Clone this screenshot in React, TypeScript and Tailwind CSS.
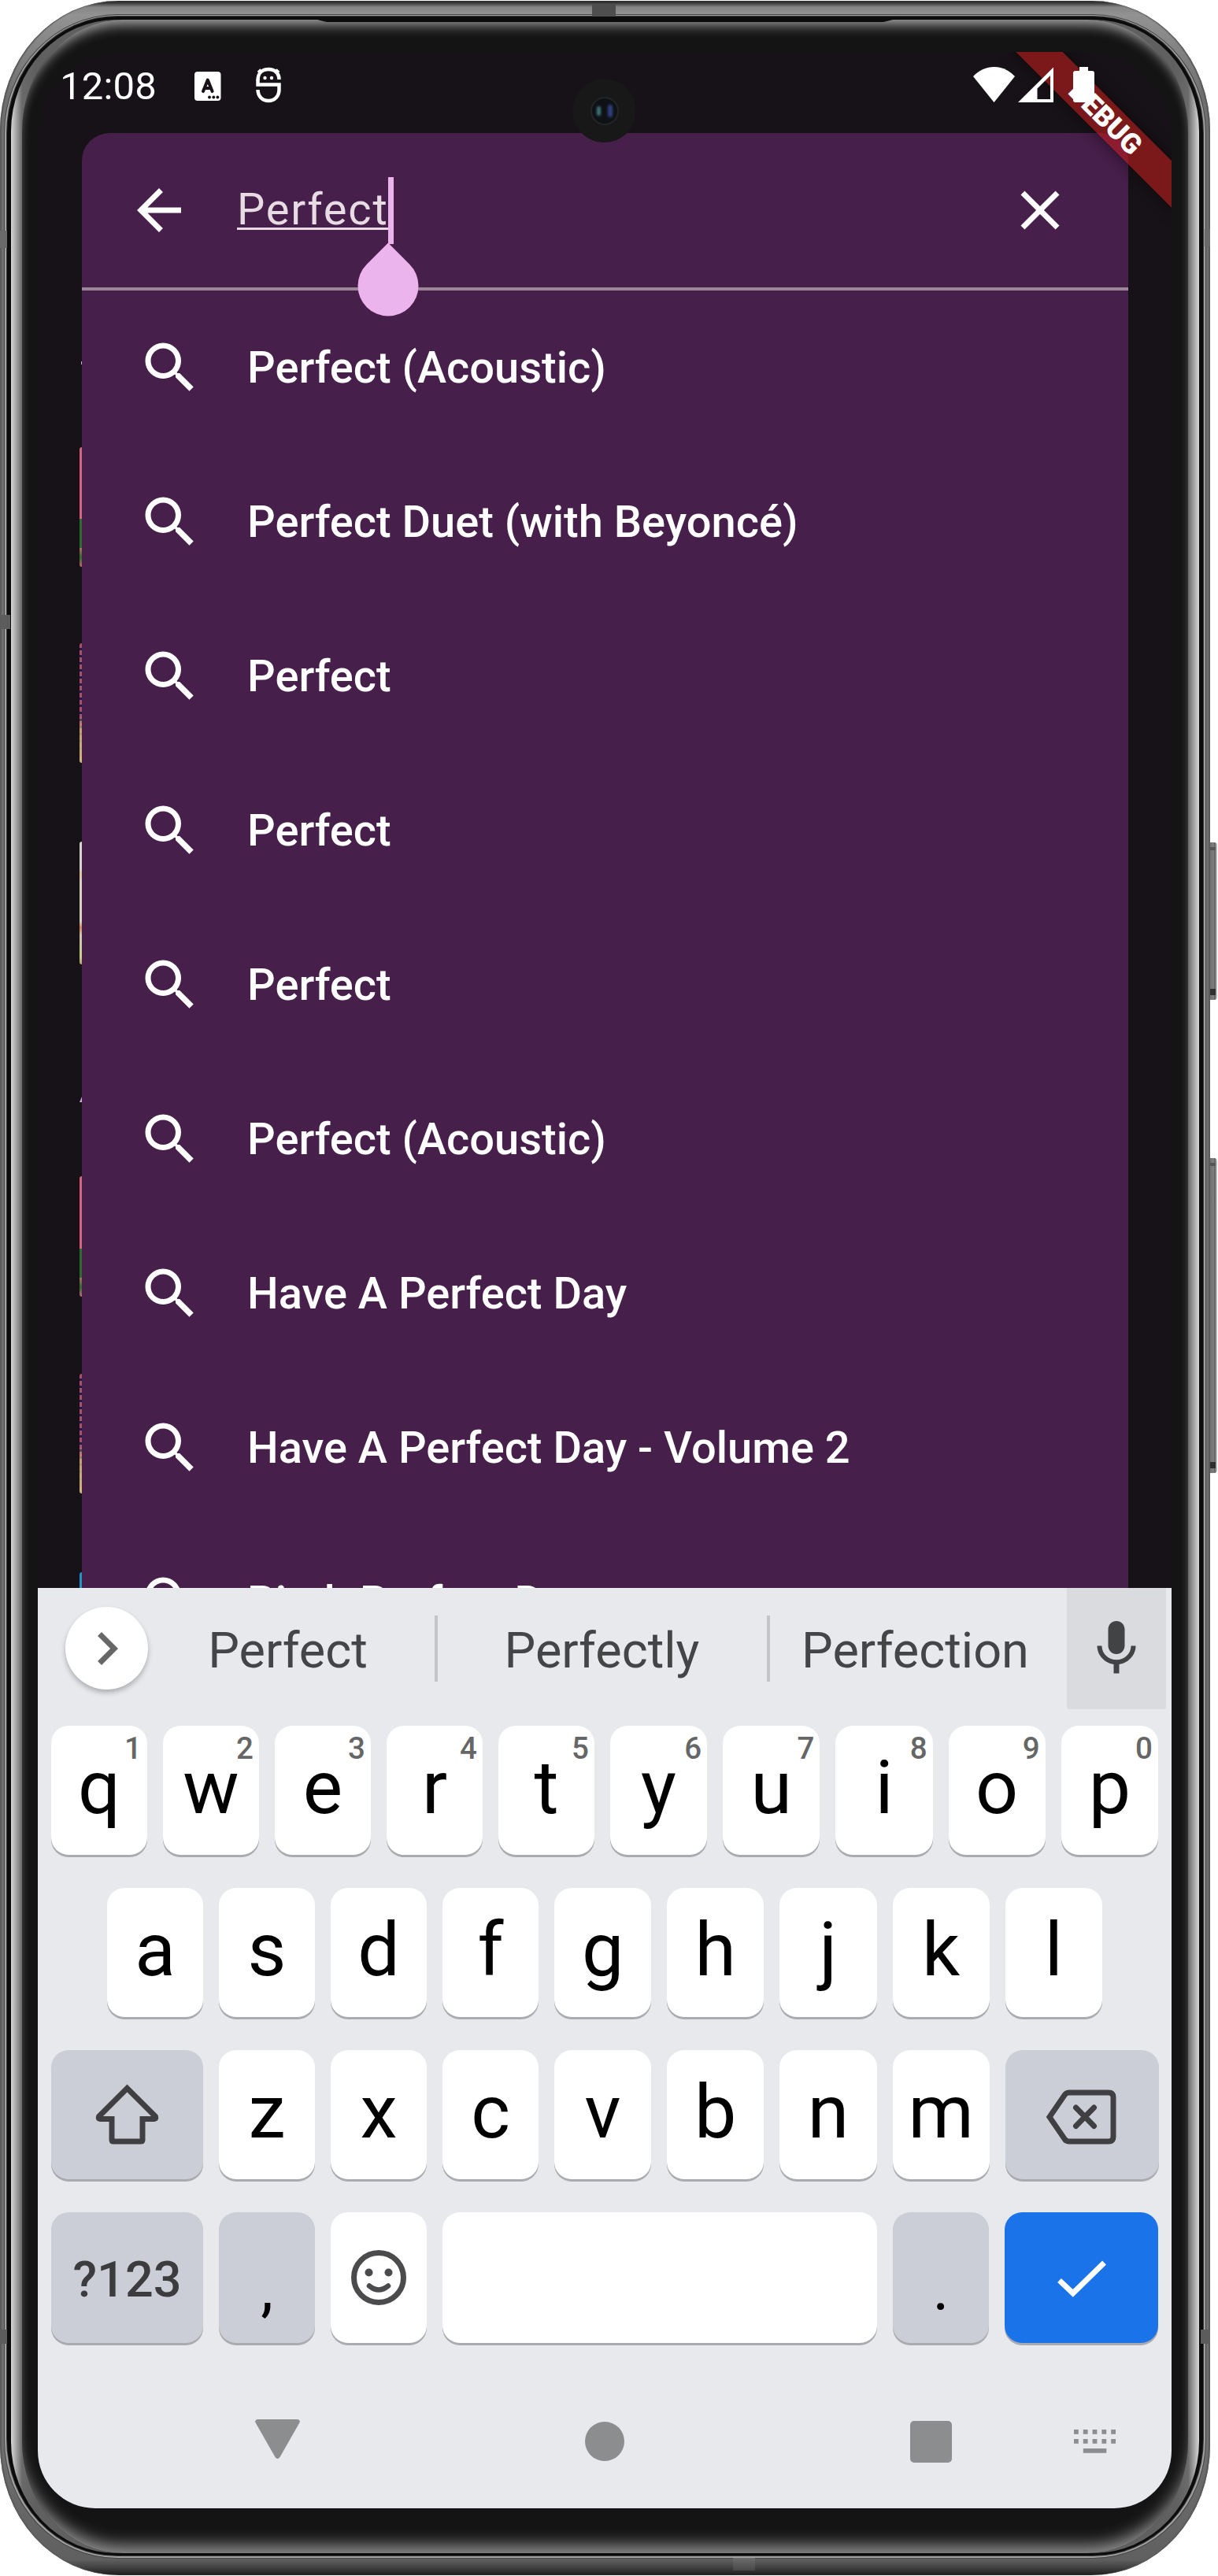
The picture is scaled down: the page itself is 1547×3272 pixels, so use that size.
import React from "react";

const RESULTS = [
  "Perfect (Acoustic)",
  "Perfect Duet (with Beyoncé)",
  "Perfect",
  "Perfect",
  "Perfect",
  "Perfect (Acoustic)",
  "Have A Perfect Day",
  "Have A Perfect Day - Volume 2",
  "Pitch Perfect Dance",
];

const ROW_ONE = ["q", "w", "e", "r", "t", "y", "u", "i", "o", "p"];
const ROW_TWO = ["a", "s", "d", "f", "g", "h", "j", "k", "l"];
const ROW_THREE = ["z", "x", "c", "v", "b", "n", "m"];

type Tone = "light" | "dark" | "blue";

const TONES: Record<Tone, string> = {
  light: "bg-white",
  dark: "bg-[#cbced6]",
  blue: "bg-[#1a73e8]",
};

const NARROW = "h-[164px] w-[122px]";
const WIDE = "h-[164px] w-[123.2px]";

function Key({
  tone = "light",
  size = NARROW,
  children,
}: {
  tone?: Tone;
  size?: string;
  children?: React.ReactNode;
}) {
  return (
    <div
      className={`relative flex shrink-0 items-center justify-center rounded-[22px] shadow-[0_3px_0_#a9abb0] ${TONES[tone]} ${size}`}
    >
      {children}
    </div>
  );
}

function Letter({ children }: { children: React.ReactNode }) {
  return <span className="pb-[7px] text-[95px] leading-[110px] text-black">{children}</span>;
}

function MaterialIcon({ d, className = "" }: { d: string; className?: string }) {
  return (
    <svg viewBox="0 0 24 24" className={`size-[84px] shrink-0 ${className}`} fill="currentColor">
      <path d={d} />
    </svg>
  );
}

const SEARCH =
  "M15.5 14h-.79l-.28-.27A6.471 6.471 0 0 0 16 9.5 6.5 6.5 0 1 0 9.5 16c1.61 0 3.09-.59 4.23-1.57l.27.28v.79l5 4.99L20.49 19l-4.99-5zm-6 0C7.01 14 5 11.99 5 9.5S7.01 5 9.5 5 14 7.01 14 9.5 11.99 14 9.5 14z";

function StatusBar() {
  return (
    <div className="flex h-[103px] shrink-0 pb-4">
      <div className="flex items-center pl-[28px] text-white">
        <span className="w-[171px] text-[49px] leading-[56px] tracking-[0.2px]">12:08</span>
        <svg viewBox="0 0 34 38" className="h-[38px] w-[34px]">
          <rect x="0" y="0" width="33.5" height="37" rx="4" fill="#fff" />
          <path d="M11 25 16.8 10.5 22.6 25M12.6 21h8.4" fill="none" stroke="#181218" strokeWidth="4" strokeLinecap="round" strokeLinejoin="round" />
          <g fill="#181218">
            <circle cx="19" cy="32.5" r="1.9" />
            <circle cx="24.3" cy="32.5" r="1.9" />
            <circle cx="29.4" cy="32.5" r="1.9" />
          </g>
        </svg>
        <svg viewBox="0 0 32 46" className="mb-[3px] ml-[44px] h-[46px] w-8" fill="none" stroke="#fff" strokeWidth="4.5">
          <path d="M2.5 16V22.500H29.5V29C29.5 37 24 43 16 43C8 43 2.5 37 2.5 29" />
          <path d="M2.5 17C2.5 8 8 3 16 3C24 3 29.5 8 29.5 16" />
          <path d="M7 7.5 3.5 4M25 7.5 28.5 4" strokeWidth="5" />
          <circle cx="11.5" cy="14" r="2.2" fill="#fff" stroke="none" />
          <circle cx="20" cy="14" r="2.2" fill="#fff" stroke="none" />
        </svg>
      </div>
    </div>
  );
}

function StatusIcons() {
  return (
    <div className="absolute top-[19px] right-[98px] flex">
      <svg viewBox="0 0 53 45" className="h-[45px] w-[53px]">
        <path d="M0 12C15-4 38-4 53 12L26.5 45Z" fill="#fff" />
      </svg>
      <svg viewBox="0 0 45 45" className="ml-1 h-[45px] w-[45px]">
        <path fillRule="evenodd" d="M45 .5V45H0ZM41 11 24.5 27.5V41H41Z" fill="#fff" />
      </svg>
      <svg viewBox="0 0 27 46" className="ml-[25px] h-[46px] w-[27px]">
        <path d="M8 0h11v5h5a3 3 0 0 1 3 3v34a3 3 0 0 1-3 3H3a3 3 0 0 1-3-3V8a3 3 0 0 1 3-3h5Z" fill="#fff" />
      </svg>
    </div>
  );
}

function SearchPanel() {
  return (
    <div className="flex min-h-0 flex-1 flex-col overflow-hidden rounded-t-[35px] bg-[#471f4b]">
      <div className="flex h-[196px] shrink-0 items-center pr-[70px] pl-14 text-white">
        <MaterialIcon d="M20 11H7.83l5.59-5.59L12 4l-8 8 8 8 1.41-1.41L7.83 13H20v-2z" />
        <div className="relative ml-[57px] flex-1">
          <span className="relative block w-[192.5px] text-[56px] leading-[85px] tracking-[1.75px] whitespace-nowrap text-[#e8dce4] -top-px">
            Perfect
          </span>
          <div className="absolute top-[64.5px] left-0 h-[3px] w-[192.5px] bg-[#e8dce4]" />
          <div className="absolute top-0 left-[192px] h-[85px] w-[7px] bg-[#ecb4ec]" />
          <svg viewBox="0 0 78 94" className="absolute top-[83px] left-[153px] z-10 h-[94px] w-[78px]">
            <path d="M39 .5 66.2 27.8A38.5 38.5 0 1 1 11.8 27.8Z" fill="#ecb4ec" />
          </svg>
        </div>
        <MaterialIcon d="M19 6.41 17.59 5 12 10.59 6.41 5 5 6.41 10.59 12 5 17.59 6.41 19 12 13.41 17.59 19 19 17.59 13.41 12z" />
      </div>
      <div className="h-[3.5px] shrink-0 bg-[#9b8797]" />
      {RESULTS.map((title, i) => (
        <div key={i} className="flex h-[196px] shrink-0 items-center pl-[70px] text-white">
          <MaterialIcon d={SEARCH} />
          <span className="ml-14 text-[56px] leading-[84px] font-medium whitespace-nowrap">{title}</span>
        </div>
      ))}
    </div>
  );
}

/** Left edges of the covers in the list behind the search panel. */
function BackdropCovers() {
  return (
    <div className="flex w-[56px] shrink-0 flex-col items-end">
      <div className="mt-[290px] h-1 w-px bg-[#c9a8d8]" />
      <div className="mt-[105px] h-[152px] w-[3px] rounded-l-[3px] bg-[linear-gradient(#d2677f_60%,#2e6b2e_60%,#2e6b2e_84%,#b07060_84%,#2e6b2e_92%,#c26a70)]" />
      <div className="mt-[97px] h-[152px] w-[3px] rounded-l-[3px] bg-[repeating-linear-gradient(#a8506a_0_6px,#1f1b50_6px_9px)]">
        <div className="h-full rounded-l-[3px] bg-[linear-gradient(transparent_60%,#d0b070cc_72%,#d0b878)]" />
      </div>
      <div className="mt-[100px] h-[156px] w-[3px] rounded-l-[3px] bg-[linear-gradient(#d8d4cc_22%,#d9c39a_26%,#d8d0c4_32%,#d8d0c4_65%,#d08a50_70%,#cfc8b0_76%,#c8d088_94%,#b8a070)]" />
      <svg viewBox="0 0 3 7" className="mt-[168px] h-[7px] w-[3px]">
        <path d="M3 0V7H0Z" fill="#d9a8dc" />
      </svg>
      <div className="mt-[94px] h-[153px] w-[3px] rounded-l-[3px] bg-[linear-gradient(#d2677f_60%,#2e6b2e_60%,#2e6b2e_84%,#b07060_84%,#2e6b2e_92%,#c26a70)]" />
      <div className="mt-[98px] h-[152px] w-[3px] rounded-l-[3px] bg-[repeating-linear-gradient(#a8506a_0_6px,#1f1b50_6px_9px)]">
        <div className="h-full rounded-l-[3px] bg-[linear-gradient(transparent_60%,#d0b070cc_72%,#d0b878)]" />
      </div>
      <div className="mt-[100px] h-[20px] w-[3px] rounded-tl-[3px] bg-[#2094c8]" />
    </div>
  );
}

function Suggestions() {
  return (
    <div className="flex h-[154px] text-[63px] leading-[74px] text-[#444547]">
      <div className="ml-[35px] mt-6 flex size-[105px] shrink-0 items-center justify-center rounded-full bg-white text-[#676767] shadow-[0_4px_6px_#00000040]">
        <MaterialIcon d="M10 6 8.59 7.41 13.17 12l-4.58 4.59L10 18l6-6z" />
      </div>
      <div className="flex w-[364px] items-center justify-center pt-[5px] pr-[9px]">Perfect</div>
      <div className="mt-[35px] h-[84px] w-[4px] bg-[#c3c4c8]" />
      <div className="flex w-[418px] items-center justify-center pt-[5px] pr-px">Perfectly</div>
      <div className="mt-[35px] h-[84px] w-[4px] bg-[#c3c4c8]" />
      <div className="flex w-[377px] items-center justify-center pt-[5px] pr-2">Perfection</div>
      <div className="flex w-[126px] items-center justify-center rounded-b-[3px] bg-[#dadbdf] text-[#424345]">
        <MaterialIcon d="M12 14c1.66 0 2.99-1.34 2.99-3L15 5c0-1.66-1.34-3-3-3S9 3.34 9 5v6c0 1.66 1.34 3 3 3zm5.3-3c0 3-2.54 5.1-5.3 5.1S6.7 14 6.7 11H5c0 3.41 2.72 6.23 6 6.72V21h2v-3.28c3.28-.48 6-3.3 6-6.72h-1.7z" />
      </div>
    </div>
  );
}

function Keyboard() {
  return (
    <div className="flex h-[1169px] shrink-0 flex-col bg-[#e8e9ed]">
      <Suggestions />
      <div className="mt-[21px] flex flex-col gap-[42px] px-[17px]">
        <div className="flex gap-5">
          {ROW_ONE.map((c, i) => (
            <Key key={c} size={i < 5 ? NARROW : WIDE}>
              <Letter>{c}</Letter>
              <span className="absolute top-[6px] right-[7px] text-[38.5px] leading-[46px] font-medium text-[#666]">{(i + 1) % 10}</span>
            </Key>
          ))}
        </div>
        <div className="flex gap-5 pl-[71px]">
          {ROW_TWO.map((c, i) => (
            <Key key={c} size={i < 4 ? NARROW : WIDE}>
              <Letter>{c}</Letter>
            </Key>
          ))}
        </div>
        <div className="flex gap-5">
          <Key tone="dark" size="h-[164px] w-[193px]">
            <svg viewBox="0 0 81 78" className="h-[78px] w-[81px]" fill="none" stroke="#404042" strokeWidth="7">
              <path d="M40.5 5.5 76.5 41.5Q77.5 44.5 75 44.5H60V71Q60 73 58 73H23Q21 73 21 71V44.5H6Q3.5 44.5 4.5 41.5Z" />
            </svg>
          </Key>
          {ROW_THREE.map((c, i) => (
            <Key key={c} size={i < 3 ? NARROW : WIDE}>
              <Letter>{c}</Letter>
            </Key>
          ))}
          <Key tone="dark" size="h-[164px] w-[195px]">
            <svg viewBox="0 0 90 70" className="mt-[5px] mr-[2px] h-[70px] w-[90px]" fill="none" stroke="#404042" strokeWidth="7">
              <path d="M5 35 24.5 6.5Q26.500 4 30 4H80Q86 4 86 10V60Q86 66 80 66H30Q26.500 66 24.500 63.500Z" />
              <path d="M38.500 23 61.500 46.500M61.500 23 38.500 46.500" strokeLinecap="round" />
            </svg>
          </Key>
        </div>
        <div className="flex gap-5">
          <Key tone="dark" size="h-[166px] w-[193px]">
            <span className="pt-[5px] text-[63px] leading-[74px] font-medium text-[#3c3c3e]">?123</span>
          </Key>
          <Key tone="dark" size="h-[166px] w-[122px]">
            <span className="pt-7 text-[80px] leading-[90px] text-black">,</span>
          </Key>
          <Key size="h-[166px] w-[122px]">
            <svg viewBox="0 0 70 70" className="size-[70px]" fill="none" stroke="#4b4b4d" strokeWidth="7">
              <circle cx="35" cy="35" r="31.500" />
              <circle cx="22.500" cy="28.500" r="5" fill="#4b4b4d" stroke="none" />
              <circle cx="47.500" cy="28.500" r="5" fill="#4b4b4d" stroke="none" />
              <path d="M23 45.500Q35 55.500 47 45.500" strokeWidth="6.500" strokeLinecap="round" />
            </svg>
          </Key>
          <Key size="h-[166px] w-[552px]" />
          <Key tone="dark" size="h-[166px] w-[122px]">
            <span className="pt-7 text-[80px] leading-[90px] text-black">.</span>
          </Key>
          <Key tone="blue" size="h-[166px] w-[195px]">
            <svg viewBox="0 0 62 47" className="mt-[2px] h-[47px] w-[62px]" fill="none" stroke="#fff" strokeWidth="7">
              <path d="M2.500 25.500 19.800 41.800 59.500 3" />
            </svg>
          </Key>
        </div>
      </div>
      <NavigationBar />
    </div>
  );
}

function NavigationBar() {
  return (
    <div className="mt-[93px] flex h-[64px] items-center pl-[276px] text-[#8c8d8f]">
      <svg viewBox="0 0 57 50" className="mb-[6px] h-[50px] w-[57px]" fill="currentColor">
        <path d="M3 0H54Q58.500 1 56 5L31.500 48Q28.500 52 25.500 48L1 5Q-1.500 1 3 0Z" />
      </svg>
      <div className="ml-[362px] size-[50px] rounded-full bg-[#8c8d8f]" />
      <div className="ml-[363px] size-[53px] rounded-[5px] bg-[#8c8d8f]" />
      <svg viewBox="0 0 53 30" className="ml-[155px] h-[30px] w-[53px]" fill="currentColor">
        {[0, 11.8, 23.6, 35.4, 47.2].map((x) => (
          <g key={x}>
            <rect x={x} y="0" width="5.800" height="5.800" />
            <rect x={x} y="12" width="5.800" height="5.800" />
          </g>
        ))}
        <rect x="11.800" y="24" width="29.500" height="5.800" />
      </svg>
    </div>
  );
}

function Camera() {
  return (
    <div className="absolute top-[34px] left-[679px] flex size-[81px] items-center justify-center rounded-full bg-[#171817]">
      <div className="flex size-[36px] items-center justify-center gap-[9px] rounded-full border-2 border-[#232526] bg-[#0e1214]">
        <div className="h-[12px] w-[5px] rounded-full bg-[#4d8d96] opacity-80 blur-[1.500px]" />
        <div className="h-[16px] w-[6px] rounded-full bg-[#3a4a9c] opacity-80 blur-[1.500px]" />
      </div>
    </div>
  );
}

function DebugRibbon() {
  return (
    <div className="absolute top-[63px] left-[1206px] flex h-[42px] w-[300px] rotate-45 items-center justify-center bg-[#b71c1ca0] text-[35.7px] leading-[42px] font-black text-white shadow-[0_0_21px_#0000007f]">
      DEBUG
    </div>
  );
}

function SideButton({ place }: { place: string }) {
  return (
    <div
      className={`absolute left-[1534px] w-[12px] rounded-r-[4px] bg-[linear-gradient(to_right,#a0a0a0,#707070_3px,#808080_8px,#4a4a4a_9px,#c0c0c0_11px)] ${place}`}
    >
      <div className="flex h-full flex-col justify-between py-[6px] pr-[2px] pl-[3px]">
        <div className="h-[4px] bg-[#555]" />
        <div className="h-[8px] bg-[#2e2e2e]" />
      </div>
    </div>
  );
}

export default function App() {
  return (
    <div className="relative h-[3272px] w-[1547px] overflow-hidden bg-white font-['Roboto',sans-serif]">
      <SideButton place="top-[1070px] h-[200px]" />
      <SideButton place="top-[1471px] h-[400px]" />
      {/* outer metal rim */}
      <div className="relative mt-px h-[3270px] w-[1537px] rounded-[150px/165px] bg-[linear-gradient(#222_0,#3c3c3c_3px,#858585_8px,#929292_18px,#707070_120px,#707070_3100px,#606060_3250px,#424242_3260px,#1c1c1c_3270px)] px-[6px] pt-[18px] pb-[22px] shadow-[inset_2px_0_1px_#5a5a5a,inset_-2px_0_1px_#5a5a5a]">
        <div className="h-full rounded-[143px/150px] bg-[#a0a0a0] px-[2px] pt-px pb-[2px] shadow-[0_0_0_1px_#444]">
          <div className="h-full rounded-[141px/149px] bg-[#3c3c3c] px-px pt-px pb-px">
            <div className="h-full rounded-[140px/148px] bg-[#0c0c0c] px-[5px] pt-[4px] pb-[3px]">
              {/* polished inner edge */}
              <div className="h-full rounded-[134px/142px] bg-[linear-gradient(to_right,#d8d8d8,#b8b8b8_4px,#6a6a6a_14px,#606060_30px,#606060_calc(100%_-_30px),#6a6a6a_calc(100%_-_14px),#b8b8b8_calc(100%_-_4px),#d8d8d8)] px-[14px]">
                <div className="h-full rounded-[128px/142px] bg-[#141414] px-[20px] pt-[41px] shadow-[inset_0_16px_16px_-10px_#a8a8a8,inset_0_-20px_20px_-10px_#909090]">
                  <div className="relative flex h-[3120px] w-[1440px] flex-col overflow-hidden rounded-[110px_110px_73px_73px] bg-[#171217]">
                    <StatusBar />
                    <div className="relative flex min-h-0 flex-1 pr-[55.500px]">
                      <BackdropCovers />
                      <SearchPanel />
                    </div>
                    <Keyboard />
                  </div>
                </div>
              </div>
            </div>
          </div>
        </div>
        {/* overlays that are clipped only by the straight display edges */}
        <div className="pointer-events-none absolute top-[65px] left-[48px] h-[600px] w-[1440px] overflow-hidden">
          <DebugRibbon />
          <StatusIcons />
          <Camera />
        </div>
        {/* earpiece slot and antenna lines */}
        <div className="absolute top-[22px] left-[395px] h-[5px] w-[747px] bg-[#0c0c0c] [clip-path:polygon(0_0,100%_0,calc(100%_-_20px)_100%,20px_100%)]" />
        <div className="absolute top-[4px] left-[752px] h-[16px] w-[30px] bg-[#4e4e4e]" />
        <div className="absolute top-[3248px] left-[931px] h-[16px] w-[28px] bg-[linear-gradient(#6c6c6c,#484848)]" />
        <div className="absolute top-[780px] left-[2px] h-[18px] w-[11px] bg-[#5c5c5c]" />
        <div className="absolute top-[292px] left-0 h-[22px] w-[9px] bg-[#6a6a6a]" />
        <div className="absolute top-[290px] right-0 h-[22px] w-[7px] bg-[#6a6a6a]" />
        <div className="absolute top-[2958px] left-0 h-[18px] w-[9px] bg-[#5c5c5c]" />
        <div className="absolute top-[2958px] right-0 h-[18px] w-[12px] bg-[#5c5c5c]" />
      </div>
    </div>
  );
}
